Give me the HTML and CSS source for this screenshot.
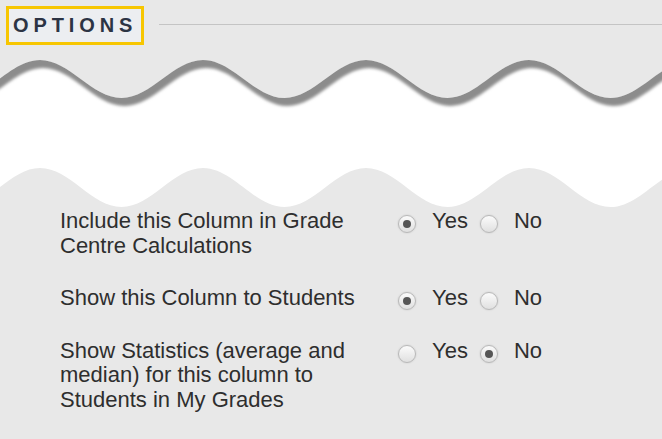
FILE: index.html
```html
<!DOCTYPE html>
<html lang="en">
<head>
<meta charset="UTF-8">
<meta name="viewport" content="width=device-width, initial-scale=1.0">
<title>Options</title>
<link rel="stylesheet" href="styles.css">
</head>
<body>

<div class="section-head">
    <h2 class="section-title">OPTIONS</h2>
    <div class="section-rule"></div>
</div>

<svg class="torn" width="662" height="164" viewBox="0 0 662 164">
    <defs>
        <filter id="edge-shadow" x="-10%" y="-20%" width="120%" height="160%">
            <feDropShadow dx="3" dy="8" stdDeviation="1.8" flood-color="#8c8c8c" flood-opacity="1"/>
        </filter>
    </defs>
    <rect x="0" y="0" width="662" height="164" fill="#fff"/>
    <!-- top edge of the cut, with its shadow -->
    <path filter="url(#edge-shadow)" fill="#e8e8e8"
          d="M-41.5,53 C-11.8,53 10.3,15 40,15 S91.8,53 121.5,53 S173.3,15 203,15 S254.8,53 284.5,53
             S336.3,15 366,15 S417.8,53 447.5,53 S499.3,15 529,15 S580.8,53 610.5,53 S662.3,15 692,15
             L692,-20 L-41.5,-20 Z"/>
    <!-- bottom edge of the cut -->
    <path fill="#e8e8e8"
          d="M-41.5,162 C-11.8,162 10.3,123 40,123 S91.8,162 121.5,162 S173.3,123 203,123 S254.8,162 284.5,162
             S336.3,123 366,123 S417.8,162 447.5,162 S499.3,123 529,123 S580.8,162 610.5,162 S662.3,123 692,123
             L692,170 L-41.5,170 Z"/>
</svg>

<div class="options">
    <div class="option-row">
        <div class="option-label">Include this Column in Grade Centre Calculations</div>
        <div class="option-choices">
            <label class="choice"><input type="radio" name="calc" checked> Yes</label>
            <label class="choice"><input type="radio" name="calc"> No</label>
        </div>
    </div>
    <div class="option-row">
        <div class="option-label">Show this Column to Students</div>
        <div class="option-choices">
            <label class="choice"><input type="radio" name="show" checked> Yes</label>
            <label class="choice"><input type="radio" name="show"> No</label>
        </div>
    </div>
    <div class="option-row">
        <div class="option-label">Show Statistics (average and median) for this column to Students in My Grades</div>
        <div class="option-choices">
            <label class="choice"><input type="radio" name="stats"> Yes</label>
            <label class="choice"><input type="radio" name="stats" checked> No</label>
        </div>
    </div>
</div>

</body>
</html>
```

FILE: styles.css
```css
body {
    margin: 0;
    padding: 0;
    background-color: #e8e8e8;
    font-family: 'Liberation Sans', Arial, sans-serif;
    color: #2e2e2e;
    overflow: hidden;
}
.section-head {
    display: flex;
    align-items: center;
    padding: 6px 0 0 6px;
}
.section-title {
    margin: 0;
    height: 33px;
    padding: 0 0 0 4px;
    width: 128px;
    border: 3px solid #f7c600;
    background-color: #eceef1;
    font-size: 20px;
    font-weight: bold;
    line-height: 33px;
    letter-spacing: 4.9px;
    color: #2c3444;
}
.section-rule {
    flex: 1;
    margin-left: 15px;
    margin-top: -2px;
    border-top: 1px solid #c4c4c4;
}
.torn {
    display: block;
}
.options {
    padding: 0 0 0 60px;
}
.option-row {
    display: flex;
    align-items: flex-start;
    margin-bottom: 28px;
}
.option-label {
    width: 300px;
    margin-right: 38px;
    font-size: 22px;
    line-height: 24.5px;
}
.option-choices {
    display: flex;
    gap: 12px;
}
.choice {
    display: flex;
    align-items: flex-start;
    font-size: 22px;
    line-height: 24.5px;
}
.choice input {
    appearance: none;
    -webkit-appearance: none;
    width: 18px;
    height: 18px;
    margin: 6px 16px 0 0;
    border: 1px solid #b8b8b8;
    border-radius: 50%;
    background: linear-gradient(#fbfbfb, #e0e0e0);
    box-shadow: 0 0 2px rgba(0, 0, 0, 0.15);
    box-sizing: border-box;
    position: relative;
}
.choice input:checked::after {
    content: "";
    position: absolute;
    left: 4px;
    top: 4px;
    width: 8px;
    height: 8px;
    border-radius: 50%;
    background-color: #565656;
}
```
